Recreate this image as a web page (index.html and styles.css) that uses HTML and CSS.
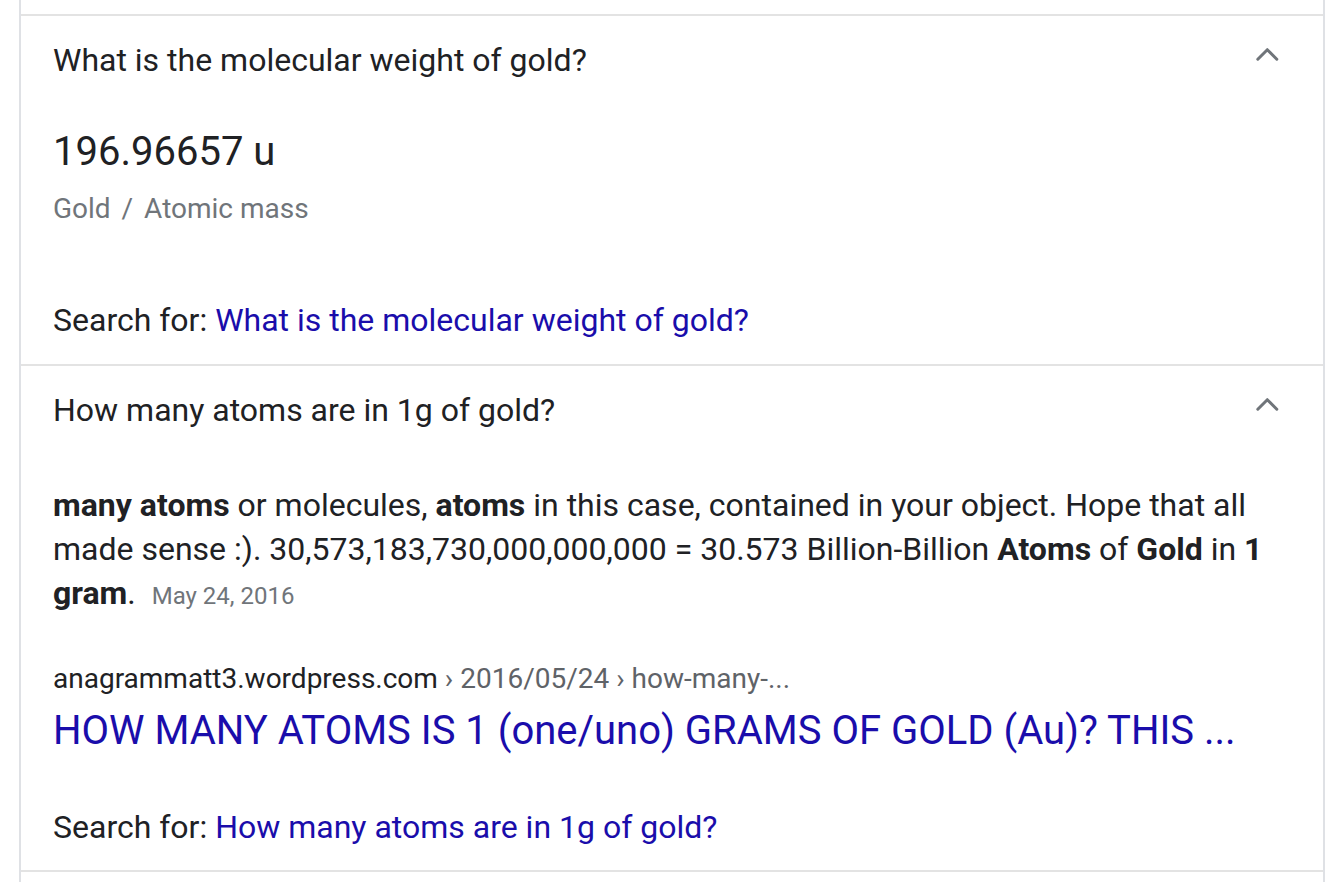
FILE: index.html
```html
<!DOCTYPE html>
<html>
<head>
<meta charset="utf-8">
<link rel="stylesheet" href="styles.css">
</head>
<body>
<div class="card">
  <div class="item">
    <div class="question">
      <span>What is the molecular weight of gold?</span>
      <svg class="chev" width="23" height="16" viewBox="0 0 23 16"><path d="M1.8 13.2 L11.3 3.7 L20.8 13.2" fill="none" stroke="#70757a" stroke-width="3" stroke-linecap="round" stroke-linejoin="round"/></svg>
    </div>
    <div class="answer1">
      <div class="big">196.96657 u</div>
      <div class="crumb">Gold <span class="slash">/</span> Atomic mass</div>
      <div class="searchfor s1">Search for: <a href="#">What is the molecular weight of gold?</a></div>
    </div>
  </div>
  <div class="item">
    <div class="question">
      <span>How many atoms are in 1g of gold?</span>
      <svg class="chev" width="23" height="16" viewBox="0 0 23 16"><path d="M1.8 13.2 L11.3 3.7 L20.8 13.2" fill="none" stroke="#70757a" stroke-width="3" stroke-linecap="round" stroke-linejoin="round"/></svg>
    </div>
    <div class="answer2">
      <p class="snippet"><b>many atoms</b> or molecules, <b>atoms</b> in this case, contained in your object. Hope that all made sense :). 30,573,183,730,000,000,000 = 30.573 Billion-Billion <b>Atoms</b> of <b>Gold</b> in <b>1 gram</b>. <span class="date">May 24, 2016</span></p>
      <div class="url">anagrammatt3.wordpress.com <span class="path">› 2016/05/24 › how-many-...</span></div>
      <a class="title" href="#">HOW MANY ATOMS IS 1 (one/uno) GRAMS OF GOLD (Au)? THIS ...</a>
      <div class="searchfor s2">Search for: <a href="#">How many atoms are in 1g of gold?</a></div>
    </div>
  </div>
</div>
</body>
</html>
```
FILE: styles.css
```css
html, body {
  margin: 0;
  padding: 0;
  background: #fff;
}
body {
  font-family: Roboto, "Liberation Sans", Arial, sans-serif;
  color: #202124;
}
.card {
  margin-left: 19px;
  width: 1302px;
  border-left: 2px solid #dfe1e5;
  border-right: 2px solid #dfe1e5;
  padding-top: 14px;
  height: 900px;
}
.item {
  border-top: 2px solid #e3e3e3;
  border-bottom: 2px solid #e3e3e3;
  margin-bottom: -2px;
}
.question {
  height: 88px;
  display: flex;
  align-items: center;
  justify-content: space-between;
  padding: 0 44px 0 32px;
  font-size: 32px;
  color: #202124;
}
.chev {
  margin-top: -12px;
}
.answer1 {
  padding: 24px 32px 24px;
}
.big {
  font-size: 40px;
  line-height: 48px;
  color: #202124;
}
.crumb {
  margin-top: 15px;
  font-size: 28px;
  line-height: 36px;
  color: #70757a;
}
.slash {
  margin: 0 4px;
}
.searchfor {
  font-size: 32px;
  line-height: 40px;
  color: #202124;
}
.searchfor a {
  color: #1a0dab;
  text-decoration: none;
}
.s1 {
  margin-top: 73px;
}
.answer2 {
  padding: 29px 32px 23px;
}
.snippet {
  margin: 0;
  font-size: 32px;
  line-height: 44px;
  color: #202124;
}
.snippet b {
  font-weight: 700;
}
.date {
  font-size: 24px;
  color: #70757a;
  margin-left: 8px;
}
.url {
  margin-top: 43px;
  font-size: 28px;
  line-height: 36px;
  color: #202124;
}
.url .path {
  color: #5f6368;
}
.title {
  display: block;
  margin-top: 12px;
  font-size: 40px;
  line-height: 44px;
  color: #1a0dab;
  text-decoration: none;
}
.s2 {
  margin-top: 54px;
}
```
